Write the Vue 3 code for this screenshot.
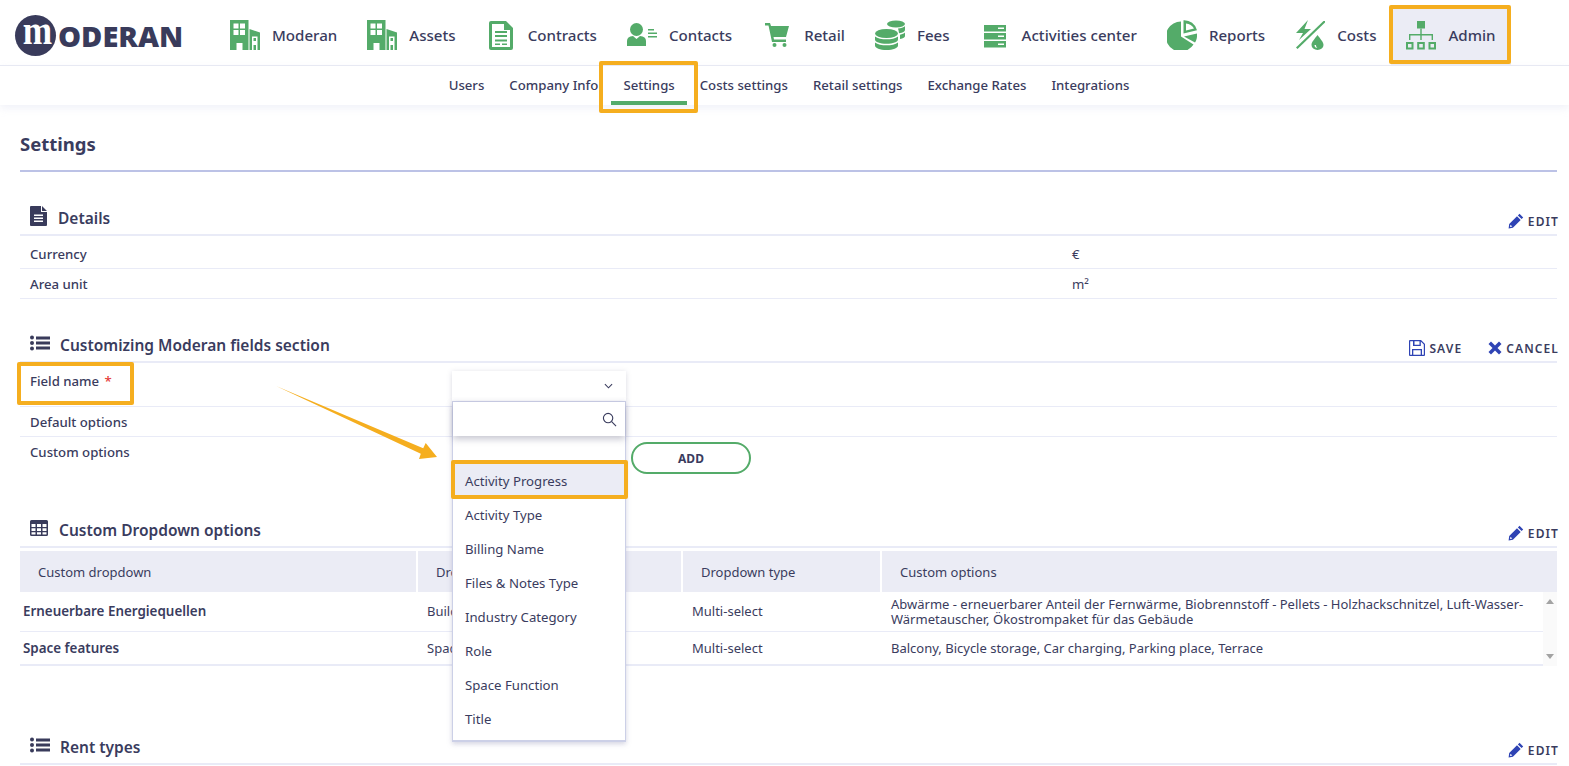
<script setup>
const navItems = [
    { label: "Moderan", icon: "building" },
    { label: "Assets", icon: "building" },
    { label: "Contracts", icon: "contract" },
    { label: "Contacts", icon: "contact" },
    { label: "Retail", icon: "cart" },
    { label: "Fees", icon: "coins" },
    { label: "Activities center", icon: "server" },
    { label: "Reports", icon: "pie" },
    { label: "Costs", icon: "costs" },
    { label: "Admin", icon: "org", active: true },
];

const subItems = [
    { label: "Users" },
    { label: "Company Info" },
    { label: "Settings", active: true },
    { label: "Costs settings" },
    { label: "Retail settings" },
    { label: "Exchange Rates" },
    { label: "Integrations" },
];

const fieldOptions = [
    "Activity Progress",
    "Activity Type",
    "Billing Name",
    "Files & Notes Type",
    "Industry Category",
    "Role",
    "Space Function",
    "Title",
];

const tableHead = ["Custom dropdown", "Dropdown module", "Dropdown type", "Custom options"];

const tableRows = [
    {
        name: "Erneuerbare Energiequellen",
        module: "Building",
        type: "Multi-select",
        options:
            "Abwärme - erneuerbarer Anteil der Fernwärme, Biobrennstoff - Pellets - Holzhackschnitzel, Luft-Wasser-Wärmetauscher, Ökostrompaket für das Gebäude",
    },
    {
        name: "Space features",
        module: "Space",
        type: "Multi-select",
        options: "Balcony, Bicycle storage, Car charging, Parking place, Terrace",
    },
];
</script>

<template>
    <div class="page">
        <header class="topbar">
            <div class="logo">
                <span class="logo-mark"><span>m</span></span>
                <span class="logo-text">ODERAN</span>
            </div>
            <nav class="main-nav">
                <a
                    v-for="item in navItems"
                    :key="item.label"
                    class="nav-item"
                    :class="{ active: item.active }"
                >
                    <svg class="nav-icon" viewBox="0 0 30 30">
                        <g v-if="item.icon === 'building'">
                            <path d="M0 0h18.500v30h-6v-7h-6v7H0z" />
                            <path d="M19.500 9L30 12.500V30H19.500z" />
                            <path
                                fill="#fff"
                                fill-rule="evenodd"
                                d="M3.500 3.500h5v5h-5zM10 3.500h5v5h-5zM3.500 10h5v5h-5zM10 10h5v5h-5zM22 16.500h5.500V30H26v-5h-2.500v5H22zM23.500 18v3H26v-3z"
                            />
                        </g>
                        <g v-else-if="item.icon === 'contract'">
                            <path d="M5 1a2 2 0 0 0-2 2v25a2 2 0 0 0 2 2h20a2 2 0 0 0 2-2V8l-7-7z" />
                            <path
                                fill="#fff"
                                d="M6 4h12v6h6v17H6zM9 11v2h12v-2zM9 15v2h12v-2zM9 19.500v2h12v-2zM9 23.500v1.500h5v-1.500zM16 23.500v1.500h5v-1.500z"
                                fill-rule="evenodd"
                            />
                        </g>
                        <g v-else-if="item.icon === 'contact'">
                            <circle cx="9.500" cy="9.500" r="6.500" />
                            <path d="M0 26v-5c0-3 2-4.500 6-5l3.500 3 3.500-3c4 .5 6 2 6 5v5z" />
                            <path d="M21 9h6v1.500h-6zM21 12.500h9V14h-9zM21 16h9v1.500h-9z" />
                        </g>
                        <g v-else-if="item.icon === 'cart'">
                            <path d="M3 3h5l1 3h18l-3 11H11.500l.5 2.500h12V22H10L6.500 5.500H3z" />
                            <circle cx="12.500" cy="25" r="2" />
                            <circle cx="22.500" cy="25" r="2" />
                        </g>
                        <g v-else-if="item.icon === 'coins'">
                            <ellipse cx="21" cy="4" rx="9" ry="3.500" />
                            <path d="M23 8.500c3-.3 5.500-1 7-2.200V10c0 1.500-2 2.700-6 3.300-.2-1.800-.5-3.500-1-4.800zM25 14.800c2.300-.5 4-1.200 5-2.200V16c0 1.200-1.700 2.300-5 3z" />
                            <ellipse cx="11.500" cy="13.500" rx="11.500" ry="4.500" />
                            <path d="M0 16.500c2.500 2 7 2.800 11.500 2.800s9-.8 11.500-2.800v3c0 2.500-5 4.300-11.500 4.300S0 22 0 19.500z" />
                            <path d="M0 22.500c2.500 2 7 2.800 11.500 2.800s9-.8 11.500-2.800v3c0 2.500-5 4.500-11.500 4.500S0 28 0 25.500z" />
                        </g>
                        <g v-else-if="item.icon === 'server'">
                            <path d="M4 5h22v6.500H4zM4 13h22v6.500H4zM4 21h22v6.500H4z" />
                            <path fill="#fff" d="M18 7.500h6V9h-6zM18 15.500h6V17h-6zM18 23.500h6V25h-6z" />
                        </g>
                        <g v-else-if="item.icon === 'pie'">
                            <path d="M14 1.500A15 15 0 1 0 26.500 24.500L14 16.500z" />
                            <path d="M16.500 0.300a13 13 0 0 1 13.500 10L16.500 13.500zM19 3.500v7l8-2a10 10 0 0 0-8-5z" fill-rule="evenodd" />
                            <path d="M17 16.500l13-3c.3 3.500-.3 6.500-2 9z" />
                        </g>
                        <g v-else-if="item.icon === 'costs'">
                            <path d="M13 0L1 13h7L4 20l12-11h-6.500L13 0z" />
                            <path d="M30 1v1.500L2.500 29 1 27.500 28.500 1z" />
                            <path d="M22.500 15c-3 4-6 7-6 10a6 5 0 0 0 12 0c0-3-3-6-6-10zM19.500 25c0 2 1.200 3 3 3-1-.6-1.500-1.500-1.500-3z" fill-rule="evenodd" />
                        </g>
                        <g v-else>
                            <path d="M11 1h8v7.500h-8z" />
                            <path d="M14.300 8.500h1.400V14H27v6h-1.400v-4.600H15.700V20h-1.400v-4.600H4.400V20H3v-6h11.300z" />
                            <path
                                fill-rule="evenodd"
                                d="M0 22h7.500v7.500H0zM2 24v3.500h3.500V24zM11.200 22h7.600v7.500h-7.600zM13.200 24v3.500h3.600V24zM22.500 22H30v7.500h-7.500zM24.500 24v3.500H28V24z"
                            />
                        </g>
                    </svg>
                    <span>{{ item.label }}</span>
                </a>
            </nav>
        </header>

        <nav class="sub-nav">
            <a
                v-for="item in subItems"
                :key="item.label"
                class="sub-item"
                :class="{ active: item.active }"
            >{{ item.label }}</a>
        </nav>

        <main class="content">
            <h1 class="page-title">Settings</h1>

            <section class="section">
                <div class="section-head">
                    <svg class="head-icon doc" viewBox="0 0 18 20">
                        <path d="M1 0h10v6h6v13a1 1 0 0 1-1 1H1a1 1 0 0 1-1-1V1a1 1 0 0 1 1-1zM12 0l5 5h-5z" />
                        <path fill="#fff" d="M4 8.500h9V10H4zM4 11.500h9V13H4zM4 14.500h9V16H4z" />
                    </svg>
                    <h2>Details</h2>
                    <a class="action edit">
                        <svg class="action-icon" viewBox="0 0 16 16">
                            <path d="M11.500.800l3.700 3.700-1.600 1.600-3.700-3.700zM9 3.300l3.700 3.700-7.800 7.800L.600 15.400l.6-4.300zM2.500 11.700l-.5 2.300 2.300-.5z" fill-rule="evenodd" />
                        </svg>
                        EDIT
                    </a>
                </div>
                <div class="row first">
                    <span class="row-label">Currency</span>
                    <span class="row-value">€</span>
                </div>
                <div class="row">
                    <span class="row-label">Area unit</span>
                    <span class="row-value">m²</span>
                </div>
            </section>

            <section class="section">
                <div class="section-head">
                    <svg class="head-icon list" viewBox="0 0 20 16">
                        <path d="M6 1.500h14v3H6zM6 6.500h14v3H6zM6 11.500h14v3H6z" />
                        <circle cx="2" cy="2.500" r="2" />
                        <circle cx="2" cy="8" r="2" />
                        <circle cx="2" cy="13.500" r="2" />
                    </svg>
                    <h2>Customizing Moderan fields section</h2>
                    <a class="action save">
                        <svg class="action-icon" viewBox="0 0 16 16">
                            <path fill-rule="evenodd" d="M0 1a1 1 0 0 1 1-1h11l4 4v11a1 1 0 0 1-1 1H1a1 1 0 0 1-1-1zM1.200 1.200v13.600H3V9h10v5.800h1.800V4.500L11.800 1.500V6H4V1.200zM5.500 1.200v3.500h5V1.200zM4.300 10.200v4.600h7.400v-4.600z" />
                        </svg>
                        SAVE
                    </a>
                    <a class="action cancel">
                        <svg class="action-icon" viewBox="0 0 14 14">
                            <path d="M3 .500L7 4.500l4-4L13.500 3l-4 4 4 4-2.500 2.500-4-4-4 4L.500 11l4-4-4-4z" />
                        </svg>
                        CANCEL
                    </a>
                </div>

                <div class="row field-row">
                    <span class="row-label">Field name <em>*</em></span>
                    <div class="select-wrap">
                        <div class="select-box">
                            <svg class="chevron" viewBox="0 0 10 6">
                                <path d="M1 1l4 4 4-4" />
                            </svg>
                        </div>
                        <div class="select-panel">
                            <div class="select-search">
                                <svg class="search-icon" viewBox="0 0 16 16">
                                    <circle cx="6.500" cy="6.500" r="5" />
                                    <path d="M10.300 10.300l4.700 4.700" />
                                </svg>
                            </div>
                            <div
                                v-for="(option, index) in fieldOptions"
                                :key="option"
                                class="select-option"
                                :class="{ selected: index === 0 }"
                            >{{ option }}</div>
                        </div>
                    </div>
                </div>
                <div class="row">
                    <span class="row-label">Default options</span>
                </div>
                <div class="row custom-row">
                    <span class="row-label">Custom options</span>
                    <button type="button" class="add-btn">ADD</button>
                </div>
            </section>

            <section class="section table-section">
                <div class="section-head">
                    <svg class="head-icon grid" viewBox="0 0 18 16">
                        <path fill-rule="evenodd" d="M1.500 0h15A1.500 1.500 0 0 1 18 1.500v13a1.500 1.500 0 0 1-1.500 1.500h-15A1.500 1.500 0 0 1 0 14.500v-13A1.500 1.500 0 0 1 1.500 0zM1.500 4v3h4V4zM7 4v3h4V4zM12.500 4v3h4V4zM1.500 8.300v2.700h4V8.300zM7 8.300v2.700h4V8.300zM12.500 8.300v2.700h4V8.300zM1.500 12.200v2.300h4v-2.300zM7 12.200v2.300h4v-2.300zM12.500 12.200v2.300h4v-2.300z" />
                    </svg>
                    <h2>Custom Dropdown options</h2>
                    <a class="action edit">
                        <svg class="action-icon" viewBox="0 0 16 16">
                            <path d="M11.500.800l3.700 3.700-1.600 1.600-3.700-3.700zM9 3.300l3.700 3.700-7.800 7.800L.600 15.400l.6-4.300zM2.500 11.700l-.5 2.300 2.300-.5z" fill-rule="evenodd" />
                        </svg>
                        EDIT
                    </a>
                </div>

                <div class="table-head">
                    <div v-for="cell in tableHead" :key="cell" class="head-cell">{{ cell }}</div>
                </div>
                <div class="table-body-wrap">
                    <div class="table-body">
                        <div v-for="row in tableRows" :key="row.name" class="table-row">
                            <div class="cell name">{{ row.name }}</div>
                            <div class="cell">{{ row.module }}</div>
                            <div class="cell">{{ row.type }}</div>
                            <div class="cell">{{ row.options }}</div>
                        </div>
                    </div>
                    <div class="scrollbar">
                        <span class="arrow up"></span>
                        <span class="arrow down"></span>
                    </div>
                </div>
            </section>

            <section class="section">
                <div class="section-head">
                    <svg class="head-icon list" viewBox="0 0 20 16">
                        <path d="M6 1.500h14v3H6zM6 6.500h14v3H6zM6 11.500h14v3H6z" />
                        <circle cx="2" cy="2.500" r="2" />
                        <circle cx="2" cy="8" r="2" />
                        <circle cx="2" cy="13.500" r="2" />
                    </svg>
                    <h2>Rent types</h2>
                    <a class="action edit">
                        <svg class="action-icon" viewBox="0 0 16 16">
                            <path d="M11.500.800l3.700 3.700-1.600 1.600-3.700-3.700zM9 3.300l3.700 3.700-7.800 7.800L.600 15.400l.6-4.300zM2.500 11.700l-.5 2.300 2.300-.5z" fill-rule="evenodd" />
                        </svg>
                        EDIT
                    </a>
                </div>
            </section>
        </main>

        <!-- annotations drawn over the screenshot -->
        <div class="mark mark-admin"></div>
        <div class="mark mark-settings"></div>
        <div class="mark mark-field"></div>
        <div class="mark mark-option"></div>
        <svg class="arrow-note" viewBox="0 0 1569 766">
            <path
                fill="#f5ae1f"
                d="M276 386L423.200 448.300 425.700 443 437 457 419 459 420.800 453.700z"
            />
        </svg>
    </div>
</template>

<style scoped>
.page {
    position: relative;
    height: 766px;
    overflow: hidden;
    background: #fff;
    color: #3a3c5e;
    font-family: "Noto Sans", "Open Sans", sans-serif;
    font-size: 13px;
}

.topbar {
    display: flex;
    align-items: center;
    height: 60px;
    padding: 5px 0 0 15px;
    border-bottom: 1px solid #e9ebf4;
}

.logo {
    display: flex;
    align-items: center;
    width: 200px;
    flex: none;
}

.logo-mark {
    display: flex;
    align-items: center;
    justify-content: center;
    width: 41px;
    height: 41px;
    border-radius: 50%;
    background: #393b5b;
    color: #fff;
    font-family: "Liberation Serif", serif;
    font-size: 42px;
    font-weight: 700;
    flex: none;
}

.logo-mark span {
    display: block;
    line-height: 41px;
    transform: translate(2px, -5px) scaleX(0.84);
}

.logo-text {
    font-size: 29px;
    font-weight: 900;
    color: #393b5b;
    margin-left: 2px;
}

.main-nav {
    display: flex;
    align-items: center;
    height: 100%;
}

.nav-item {
    display: flex;
    align-items: center;
    gap: 12px;
    height: 100%;
    padding: 0 15px;
    font-size: 15.100px;
    font-weight: 500;
    white-space: nowrap;
}

.nav-item.active {
    background: #ebecf5;
    height: 59px;
}

.nav-icon {
    width: 30px;
    height: 30px;
    fill: #54ab69;
    flex: none;
}

.sub-nav {
    display: flex;
    justify-content: center;
    height: 39px;
    padding-left: 9px;
    box-shadow: 0 3px 8px rgba(200, 203, 230, 0.28);
}

.sub-item {
    display: flex;
    align-items: center;
    height: 39px;
    padding: 0 12.500px 2px;
    box-sizing: border-box;
    font-size: 13.200px;
    font-weight: 500;
    white-space: nowrap;
}

.sub-item.active {
    border-bottom: 4px solid #54ab69;
    padding-top: 2px;
    padding-bottom: 0;
}

.content {
    padding: 0 12px 0 20px;
}

.page-title {
    margin: 0;
    height: 67px;
    box-sizing: border-box;
    padding-top: 24px;
    border-bottom: 2px solid #bcc2e6;
    font-size: 18.500px;
    font-weight: 700;
    line-height: 30px;
}

.section {
    margin-top: 34px;
}

.table-section {
    margin-bottom: 69px;
}

.section-head {
    display: flex;
    align-items: flex-start;
    height: 30px;
    box-sizing: border-box;
    border-bottom: 2px solid #e9ebf7;
    padding-left: 10px;
}

.section-head h2 {
    margin: 0;
    font-size: 15.500px;
    font-weight: 600;
    line-height: 24px;
}

.head-icon {
    fill: #393b5b;
    flex: none;
}

.head-icon.doc {
    width: 18px;
    height: 20px;
    margin-right: 10px;
}

.head-icon.list {
    width: 20px;
    height: 16px;
    margin-right: 10px;
    margin-top: 2px;
}

.head-icon.grid {
    width: 18px;
    height: 16px;
    margin-right: 11px;
    margin-top: 2px;
}

.action {
    display: flex;
    align-items: center;
    gap: 4px;
    height: 16px;
    margin-top: 7px;
    font-size: 12px;
    font-weight: 600;
    letter-spacing: 1.100px;
    white-space: nowrap;
}

.action:last-child {
    margin-right: -2px;
}

.action.edit,
.action.save {
    margin-left: auto;
}

.action.cancel {
    margin-left: 26px;
}

.action-icon {
    width: 16px;
    height: 16px;
    fill: #2e43b4;
    flex: none;
}

.cancel .action-icon {
    width: 14px;
    height: 14px;
}

.row {
    display: flex;
    align-items: center;
    height: 30px;
    box-sizing: border-box;
    padding-left: 10px;
    border-bottom: 1px solid #e9ebf7;
    font-size: 13.200px;
    font-weight: 500;
}

.row.first {
    height: 33px;
    padding-top: 3px;
}

.row-label {
    width: 1042px;
    flex: none;
}

.row-value {
    font-weight: 400;
}

.row-label em {
    color: #e53935;
    font-style: normal;
    margin-left: 2px;
}

.field-row {
    align-items: flex-start;
    height: 44px;
    padding-top: 8px;
}

.field-row .row-label {
    width: 422px;
    line-height: 20px;
}

.select-wrap {
    position: relative;
    width: 174px;
    z-index: 5;
}

.select-box {
    display: flex;
    align-items: center;
    justify-content: flex-end;
    height: 30px;
    padding-right: 13px;
    box-sizing: border-box;
    background: #fff;
    box-shadow: 0 1px 5px rgba(130, 130, 160, 0.3);
}

.chevron {
    width: 9px;
    height: 6px;
    fill: none;
    stroke: #3a3c5e;
    stroke-width: 1.200;
}

.select-panel {
    position: absolute;
    top: 30px;
    left: 0;
    width: 174px;
    height: 341px;
    box-sizing: border-box;
    background: #fff;
    border: 1px solid #ccd0e7;
    border-bottom-width: 2px;
    box-shadow: 0 2px 5px rgba(130, 130, 170, 0.35);
    font-weight: 400;
}

.select-search {
    display: flex;
    align-items: center;
    justify-content: flex-end;
    height: 34px;
    padding-right: 8px;
    margin-bottom: 28px;
    box-sizing: border-box;
    background: #fff;
    box-shadow: 0 3px 7px rgba(90, 90, 120, 0.35);
}

.search-icon {
    width: 15px;
    height: 15px;
    fill: none;
    stroke: #3a3c5e;
    stroke-width: 1.200;
}

.select-option {
    display: flex;
    align-items: center;
    height: 34px;
    padding-left: 12px;
    white-space: nowrap;
}

.select-option.selected {
    background: #ebecf5;
}

.custom-row {
    align-items: flex-start;
    height: 47px;
    border-bottom: 0;
}

.custom-row .row-label {
    width: 422px;
    line-height: 30px;
}

.add-btn {
    width: 120px;
    height: 32px;
    margin: 5px 0 0 179px;
    border: 2px solid #54ab69;
    border-radius: 16px;
    background: #fff;
    color: #3a3c5e;
    font-family: inherit;
    font-size: 12px;
    font-weight: 700;
}

.table-head {
    display: grid;
    grid-template-columns: 396px 263px 197px 1fr;
    gap: 2px;
    margin-top: 3px;
    height: 41px;
}

.head-cell {
    display: flex;
    align-items: center;
    padding-left: 18px;
    background: #ebecf5;
}

.table-body-wrap {
    display: flex;
}

.table-body {
    flex: 1;
    border-bottom: 2px solid #e9ebf7;
}

.table-row {
    display: grid;
    grid-template-columns: 396px 263px 197px 1fr;
    gap: 2px;
    align-items: center;
    box-sizing: border-box;
    height: 32px;
    border-bottom: 1px solid #e9ebf7;
}

.table-row:first-child {
    height: 40px;
}

.table-row:last-child {
    border-bottom: 0;
}

.cell {
    padding-left: 9px;
    padding-right: 12px;
    line-height: 14.500px;
}

.cell.name {
    padding-left: 3px;
    font-size: 13.400px;
    font-weight: 600;
}

.scrollbar {
    position: relative;
    width: 14px;
    flex: none;
    background: #fafafa;
}

.arrow {
    position: absolute;
    left: 3px;
    border-left: 4.500px solid transparent;
    border-right: 4.500px solid transparent;
}

.arrow.up {
    top: 7px;
    border-bottom: 5px solid #a3a3a3;
}

.arrow.down {
    bottom: 7px;
    border-top: 5px solid #a3a3a3;
}

.mark {
    position: absolute;
    box-sizing: border-box;
    border: 4px solid #f5ae1f;
    border-radius: 2px;
    z-index: 10;
    pointer-events: none;
}

.mark-admin {
    left: 1389px;
    top: 5px;
    width: 122px;
    height: 59px;
}

.mark-settings {
    left: 599px;
    top: 61px;
    width: 99px;
    height: 52px;
}

.mark-field {
    left: 17px;
    top: 362px;
    width: 117px;
    height: 43px;
}

.mark-option {
    left: 451px;
    top: 460px;
    width: 177px;
    height: 39px;
}

.arrow-note {
    position: absolute;
    left: 0;
    top: 0;
    width: 1569px;
    height: 766px;
    z-index: 11;
    pointer-events: none;
}
</style>

<style>
html,
body {
    margin: 0;
    overflow: hidden;
}
</style>
